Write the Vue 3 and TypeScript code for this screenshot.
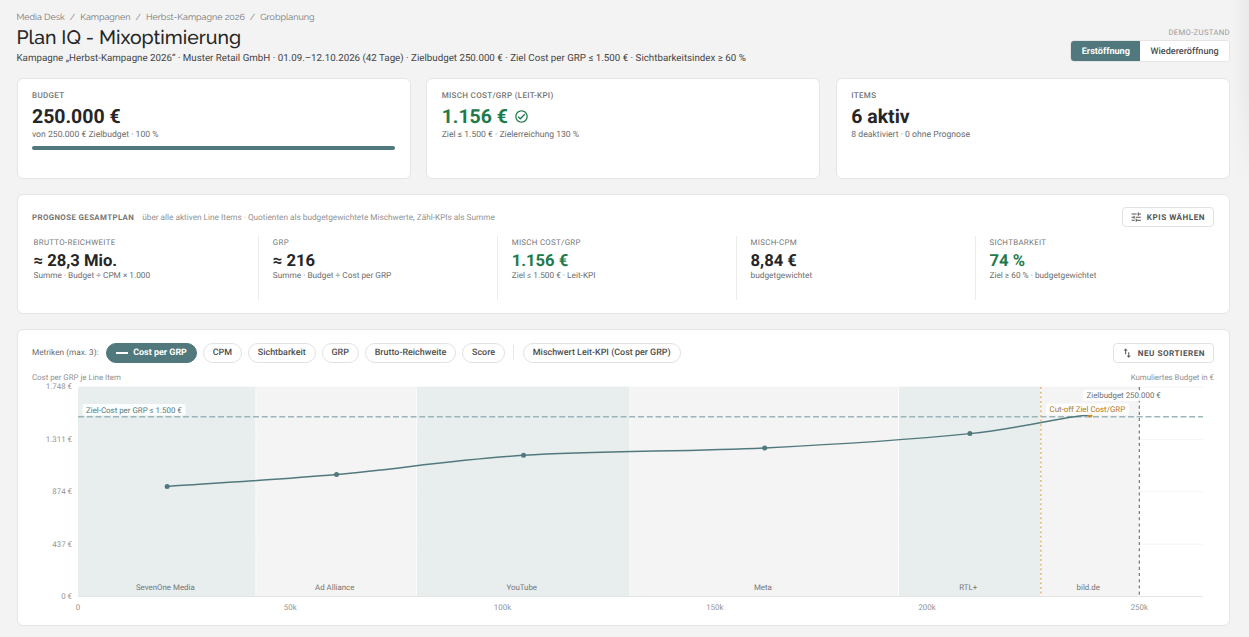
<template>
  <div class="page">
    <header class="page-header">
      <div class="heading">
        <nav class="breadcrumb">
          <template v-for="(crumb, i) in crumbs" :key="crumb">
            <span v-if="i > 0" class="sep">/</span>
            <a>{{ crumb }}</a>
          </template>
        </nav>
        <h1>Plan IQ - Mixoptimierung</h1>
        <p class="subtitle">{{ subtitle }}</p>
      </div>
      <div class="demo">
        <span class="demo-label">DEMO-ZUSTAND</span>
        <div class="toggle">
          <button
            v-for="s in states"
            :key="s"
            :class="{ active: s === state }"
            @click="state = s"
          >
            {{ s }}
          </button>
        </div>
      </div>
    </header>

    <section class="summary">
      <div class="card summary-card">
        <div class="label">BUDGET</div>
        <div class="value">250.000 €</div>
        <div class="note">von 250.000 € Zielbudget · 100 %</div>
        <div class="progress">
          <div class="bar" :style="{ width: budgetUsed + '%' }"></div>
        </div>
      </div>
      <div class="card summary-card">
        <div class="label">MISCH COST/GRP (LEIT-KPI)</div>
        <div class="value good">
          1.156 €
          <svg class="check" viewBox="0 0 24 24">
            <path
              d="M12 2C6.48 2 2 6.48 2 12s4.48 10 10 10 10-4.48 10-10S17.52 2 12 2zm0 18c-4.41 0-8-3.59-8-8s3.59-8 8-8 8 3.59 8 8-3.59 8-8 8zm4.59-12.42L10 14.17l-2.59-2.58L6 13l4 4 8-8z"
            />
          </svg>
        </div>
        <div class="note">Ziel ≤ 1.500 € · Zielerreichung 130 %</div>
      </div>
      <div class="card summary-card">
        <div class="label">ITEMS</div>
        <div class="value">6 aktiv</div>
        <div class="note">8 deaktiviert · 0 ohne Prognose</div>
      </div>
    </section>

    <section class="card forecast">
      <div class="forecast-head">
        <span class="forecast-title">PROGNOSE GESAMTPLAN</span>
        <span class="forecast-hint">
          über alle aktiven Line Items · Quotienten als budgetgewichtete Mischwerte, Zähl-KPIs als
          Summe
        </span>
        <button class="btn kpi-btn">
          <svg viewBox="0 0 24 24">
            <path
              d="M3 17v2h6v-2H3zM3 5v2h10V5H3zm10 16v-2h8v-2h-8v-2h-2v6h2zM7 9v2H3v2h4v2h2V9H7zm14 4v-2H11v2h10zm-6-4h2V7h4V5h-4V3h-2v6z"
            />
          </svg>
          KPIS WÄHLEN
        </button>
      </div>
      <div class="kpis">
        <div v-for="kpi in kpis" :key="kpi.label" class="kpi">
          <div class="label">{{ kpi.label }}</div>
          <div class="kpi-value" :class="{ good: kpi.good }">{{ kpi.value }}</div>
          <div class="kpi-note">{{ kpi.note }}</div>
        </div>
      </div>
    </section>

    <section class="card chart-card">
      <div class="metrics">
        <span class="metrics-label">Metriken (max. 3):</span>
        <button
          v-for="m in metrics"
          :key="m"
          class="chip"
          :class="{ active: selected.includes(m) }"
          @click="toggleMetric(m)"
        >
          <i v-if="selected.includes(m)" class="dash"></i>{{ m }}
        </button>
        <span class="divider"></span>
        <button class="chip">Mischwert Leit-KPI (Cost per GRP)</button>
        <button class="btn sort-btn">
          <svg viewBox="0 0 24 24">
            <path d="M16 17.01V10h-2v7.01h-3L15 21l4-3.99h-3zM9 3L5 6.99h3V14h2V6.99h3L9 3z" />
          </svg>
          NEU SORTIEREN
        </button>
      </div>
      <div class="axis-titles">
        <span>Cost per GRP je Line Item</span>
        <span>Kumuliertes Budget in €</span>
      </div>
      <svg class="chart" width="1182" height="232" viewBox="32 383 1182 232">
        <line
          v-for="t in yTicks"
          :key="'g' + t"
          class="grid"
          :x1="LEFT"
          :x2="RIGHT"
          :y1="y(t)"
          :y2="y(t)"
        />
        <g v-for="(b, i) in bands" :key="b.name">
          <rect
            :class="i % 2 ? 'band-odd' : 'band-even'"
            :x="x(b.from)"
            :y="TOP"
            :width="x(b.to) - x(b.from) - 0.8"
            :height="BOTTOM - TOP"
          />
          <text class="band-name" :x="x((b.from + b.to) / 2) - 1.8" y="590.3">{{ b.name }}</text>
        </g>
        <line class="axis" :x1="LEFT" :x2="RIGHT" :y1="BOTTOM" :y2="BOTTOM" />
        <text
          v-for="t in yTicks"
          :key="'y' + t"
          class="tick y-tick"
          x="72"
          :y="y(t) + 2.4"
        >{{ t.toLocaleString('de-DE') }} €</text>
        <text
          v-for="t in xTicks"
          :key="'x' + t"
          class="tick x-tick"
          :x="x(t)"
          y="610"
        >{{ t ? t + 'k' : '0' }}</text>

        <line class="target" :x1="LEFT" :x2="RIGHT" :y1="y(1500)" :y2="y(1500)" />
        <path class="curve" :d="curve" />
        <circle
          v-for="(p, i) in points"
          :key="i"
          :class="i === points.length - 1 ? 'dot over' : 'dot'"
          :cx="p[0]"
          :cy="p[1]"
          r="2.5"
        />
        <line class="cutoff" :x1="x(226.8)" :x2="x(226.8)" :y1="TOP" :y2="BOTTOM" />
        <line class="budget" :x1="x(250)" :x2="x(250)" :y1="TOP" :y2="BOTTOM" />
        <rect class="tag" x="82.5" y="404" width="103" height="11.5" rx="2" />
        <text class="tag-target" x="86" y="412.8">Ziel-Cost per GRP ≤ 1.500 €</text>
        <rect class="tag" x="1083" y="390" width="82" height="11" rx="2" />
        <rect class="tag" x="1046" y="403.5" width="83" height="11.5" rx="2" />
        <text class="tag-budget" x="1086.5" y="398">Zielbudget 250.000 €</text>
        <text class="tag-cutoff" x="1049.5" y="412">Cut-off Ziel Cost/GRP</text>
      </svg>
    </section>
    <div class="edge-shadow"></div>
  </div>
</template>

<script setup lang="ts">
  import { computed, ref } from 'vue';

  interface Kpi {
    label: string;
    value: string;
    note: string;
    good?: boolean;
  }

  const crumbs = ['Media Desk', 'Kampagnen', 'Herbst-Kampagne 2026', 'Grobplanung'];
  const subtitle =
    'Kampagne „Herbst-Kampagne 2026“ · Muster Retail GmbH · 01.09.–12.10.2026 (42 Tage) · Zielbudget 250.000 € · Ziel Cost per GRP ≤ 1.500 € · Sichtbarkeitsindex ≥ 60 %';

  const states = ['Erstöffnung', 'Wiedereröffnung'];
  const state = ref(states[0]);
  const budgetUsed = ref(100);

  const kpis: Kpi[] = [
    { label: 'BRUTTO-REICHWEITE', value: '≈ 28,3 Mio.', note: 'Summe · Budget ÷ CPM × 1.000' },
    { label: 'GRP', value: '≈ 216', note: 'Summe · Budget ÷ Cost per GRP' },
    { label: 'MISCH COST/GRP', value: '1.156 €', note: 'Ziel ≤ 1.500 € · Leit-KPI', good: true },
    { label: 'MISCH-CPM', value: '8,84 €', note: 'budgetgewichtet' },
    { label: 'SICHTBARKEIT', value: '74 %', note: 'Ziel ≥ 60 % · budgetgewichtet', good: true },
  ];

  const metrics = ['Cost per GRP', 'CPM', 'Sichtbarkeit', 'GRP', 'Brutto-Reichweite', 'Score'];
  const selected = ref(['Cost per GRP']);

  function toggleMetric(m: string) {
    if (selected.value.includes(m)) {
      selected.value = selected.value.filter((s) => s !== m);
    } else if (selected.value.length < 3) {
      selected.value.push(m);
    }
  }

  // Plot area
  const LEFT = 78,
    RIGHT = 1203,
    TOP = 387,
    BOTTOM = 596.5;

  const x = (k: number) => LEFT + (k / 265) * (RIGHT - LEFT);
  const y = (v: number) => BOTTOM - (v / 1748) * (BOTTOM - TOP);

  const yTicks = [1748, 1311, 874, 437, 0];
  const xTicks = [0, 50, 100, 150, 200, 250];

  // Cumulated budget in thousand euros, cost = Cost per GRP of the item
  const bands = [
    { name: 'SevenOne Media', from: 0, to: 42, cost: 918 },
    { name: 'Ad Alliance', from: 42, to: 79.8, cost: 1018 },
    { name: 'YouTube', from: 79.8, to: 130.1, cost: 1178 },
    { name: 'Meta', from: 130.1, to: 193.4, cost: 1240 },
    { name: 'RTL+', from: 193.4, to: 226.8, cost: 1359 },
    { name: 'bild.de', from: 226.8, to: 250, cost: 1515 },
  ];

  const points = computed(() => bands.map((b) => [x((b.from + b.to) / 2), y(b.cost)]));

  const curve = computed(() => {
    const p = points.value;
    let d = `M${p[0][0]},${p[0][1]}`;
    for (let i = 0; i < p.length - 1; i++) {
      const a = p[Math.max(i - 1, 0)],
        b = p[i],
        c = p[i + 1],
        e = p[Math.min(i + 2, p.length - 1)];
      // The last segment runs out flat
      const endY = i === p.length - 2 ? c[1] : c[1] - (e[1] - b[1]) / 6;
      d += `C${b[0] + (c[0] - a[0]) / 6},${b[1] + (c[1] - a[1]) / 6} ${c[0] - (e[0] - b[0]) / 6},${endY} ${c[0]},${c[1]}`;
    }
    return d;
  });
</script>

<style>
  body {
    background: #f3f3f3;
    overflow: hidden;
  }
</style>

<style scoped>
  .page {
    box-sizing: border-box;
    width: 1249px;
    height: 637px;
    padding: 11px 19px 0 16.5px;
    font-family: Roboto, 'Liberation Sans', sans-serif;
    color: #262626;
    text-rendering: geometricPrecision;
  }

  button {
    font-family: inherit;
    text-rendering: inherit;
    cursor: pointer;
  }

  .page-header {
    display: flex;
    justify-content: space-between;
    height: 67px;
  }

  .breadcrumb {
    display: flex;
    gap: 5px;
    padding-top: 1px;
    font-family: Raleway, Lato, sans-serif;
    font-size: 8.93px;
    line-height: 12px;
    color: #757575;
  }

  h1 {
    margin: 1px 0 0;
    font-family: Raleway, Lato, sans-serif;
    font-size: 19.45px;
    font-weight: 500;
    line-height: 26px;
  }

  .subtitle {
    margin: 1.5px 0 0;
    font-size: 9.76px;
    line-height: 12px;
    color: #454545;
  }

  .demo {
    display: flex;
    flex-direction: column;
    align-items: flex-end;
    padding-top: 16px;
  }

  .demo-label {
    font-size: 7.75px;
    line-height: 11px;
    letter-spacing: 0.3px;
    color: #999;
  }

  .toggle {
    display: flex;
    margin-top: 2px;
    border: 1px solid #e4e4e4;
    border-radius: 4px;
    background: #fff;
    overflow: hidden;
  }

  .toggle button {
    height: 20px;
    padding: 1px 10.3px 0;
    border: 0;
    background: #fff;
    font-size: 9.1px;
    font-weight: 500;
    color: #4d4d4d;
  }

  .toggle button.active {
    background: #51797d;
    color: #fff;
    font-weight: 700;
  }

  .card {
    box-sizing: border-box;
    border: 1px solid #e5e5e5;
    border-radius: 6px;
    background: #fff;
  }

  .summary {
    display: grid;
    grid-template-columns: repeat(3, 1fr);
    gap: 15.5px;
    height: 101px;
  }

  .summary-card {
    padding: 11px 14.5px;
  }

  .label {
    font-size: 7.9px;
    line-height: 11px;
    letter-spacing: 0.3px;
    color: #757575;
  }

  .summary-card .label {
    font-size: 8.05px;
    font-weight: 500;
  }

  .value {
    display: flex;
    align-items: center;
    gap: 6px;
    margin-top: 4px;
    font-size: 19.45px;
    font-weight: 700;
    line-height: 24px;
  }

  .good {
    color: #1e7b4b;
  }

  .check {
    width: 15px;
    height: 15px;
    margin-top: -1.5px;
    fill: currentColor;
  }

  .note {
    margin-top: 1px;
    font-size: 8.65px;
    line-height: 11px;
    color: #6c6c6c;
  }

  .progress {
    height: 4px;
    margin-top: 5px;
    border-radius: 2px;
    background: #eee;
  }

  .bar {
    height: 100%;
    border-radius: 2px;
    background: #51797d;
  }

  .forecast {
    height: 119.3px;
    margin-top: 15.3px;
    padding: 12px 15px 0 14.5px;
  }

  .forecast-head {
    display: flex;
    align-items: center;
    height: 20px;
  }

  .forecast-title {
    font-size: 7.85px;
    font-weight: 700;
    letter-spacing: 0.4px;
    color: #757575;
  }

  .forecast-hint {
    margin-left: 8px;
    padding-top: 1.5px;
    font-size: 8.23px;
    color: #919191;
  }

  .btn {
    display: flex;
    align-items: center;
    gap: 4px;
    box-sizing: border-box;
    height: 20px;
    margin-left: auto;
    padding: 0 8px 0 7px;
    border: 1px solid #e2e2e2;
    border-radius: 4px;
    background: #fff;
    font-size: 8.15px;
    font-weight: 700;
    letter-spacing: 0.5px;
    color: #555;
  }

  .btn svg {
    width: 12.4px;
    height: 12.4px;
    fill: #555;
  }

  .kpis {
    display: grid;
    grid-template-columns: 226.3px repeat(3, 238.9px) 1fr;
    margin-top: 9px;
  }

  .kpi {
    box-sizing: border-box;
    height: 64px;
    padding: 1px 14px 0 13.5px;
    border-left: 1px solid #ececec;
  }

  .kpi:first-child {
    padding-left: 1.5px;
    border-left: 0;
  }

  .kpi-value {
    margin-top: 4px;
    font-size: 16.6px;
    font-weight: 700;
    line-height: 19px;
  }

  .kpi-note {
    font-size: 8.27px;
    line-height: 11px;
    color: #6c6c6c;
  }

  .chart-card {
    height: 297.5px;
    margin-top: 15.3px;
    padding: 13px 15px 0 14.5px;
  }

  .metrics {
    display: flex;
    align-items: center;
    gap: 6px;
    height: 20px;
  }

  .metrics-label {
    margin-right: 1.8px;
    padding-top: 1px;
    font-size: 8.25px;
    color: #6c6c6c;
  }

  .chip {
    display: flex;
    align-items: center;
    box-sizing: border-box;
    height: 20px;
    padding: 1px 8.9px 0;
    border: 1px solid #e2e2e2;
    border-radius: 10px;
    background: #fff;
    font-size: 8.95px;
    font-weight: 500;
    color: #4d4d4d;
    white-space: nowrap;
  }

  .chip.active {
    border-color: #51797d;
    background: #51797d;
    color: #fff;
    font-weight: 700;
  }

  .dash {
    width: 12px;
    height: 1.5px;
    margin: -1px 5px 0 0;
    background: #fff;
  }

  .divider {
    width: 1px;
    height: 15px;
    margin: 0 2.5px;
    background: #e8e8e8;
  }

  .axis-titles {
    display: flex;
    justify-content: space-between;
    margin-top: 9px;
    font-size: 7.86px;
    line-height: 12px;
    color: #919191;
  }

  .chart {
    display: block;
    overflow: visible;
    margin-top: -1.1px;
  }

  .chart text {
    font-size: 7.9px;
  }

  .grid {
    stroke: #f4f4f4;
  }

  .axis {
    stroke: #e4e4e4;
  }

  .band-even {
    fill: #e8eeee;
  }

  .band-odd {
    fill: #f4f4f4;
  }

  .band-name {
    fill: #757575;
    text-anchor: middle;
  }

  .tick {
    fill: #939393;
  }

  .y-tick {
    text-anchor: end;
  }

  .x-tick {
    text-anchor: middle;
  }

  .target {
    stroke: #9bb5b8;
    stroke-width: 1.5;
    stroke-dasharray: 6 2.75;
  }

  .curve {
    fill: none;
    stroke: #51797d;
    stroke-width: 1.5;
  }

  .dot {
    fill: #51797d;
  }

  .dot.over {
    fill: #c98d30;
  }

  .cutoff {
    stroke: #dfb87c;
    stroke-width: 1.5;
    stroke-dasharray: 2 2.65;
  }

  .budget {
    stroke: #757575;
    stroke-width: 1.2;
    stroke-dasharray: 3.1 3.1;
  }

  .tag {
    fill: #fff;
    fill-opacity: 0.85;
  }

  .tag-target {
    fill: #51797d;
  }

  .tag-budget {
    fill: #6c6c6c;
  }

  .tag-cutoff {
    fill: #b3751a;
  }

  .edge-shadow {
    position: absolute;
    top: 0;
    right: 0;
    width: 16px;
    height: 190px;
    background: linear-gradient(to right, transparent, rgba(0, 0, 0, 0.035));
    mask-image: linear-gradient(#000 50%, transparent);
  }
</style>
